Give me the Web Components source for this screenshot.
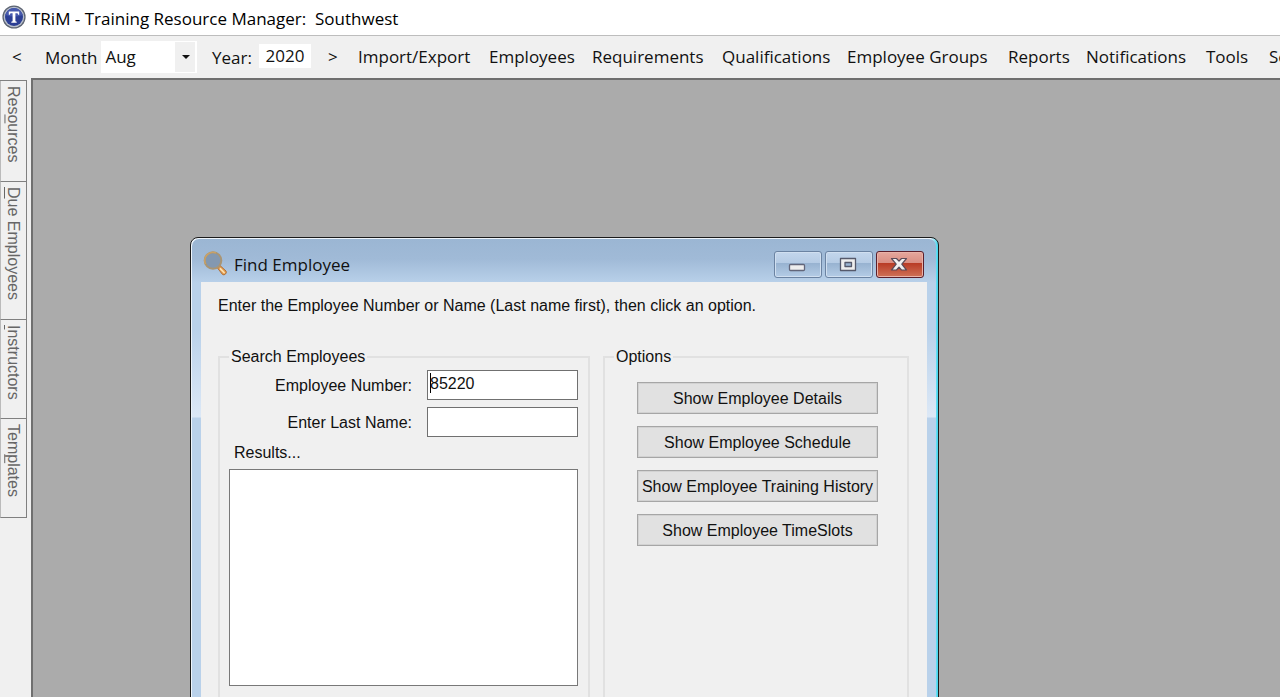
<!DOCTYPE html>
<html lang="en">
<head>
<meta charset="utf-8">
<title>TRiM - Training Resource Manager</title>
<style>
  html, body { height: 100%; margin: 0; overflow: hidden; }
  body {
    --ui: "Open Sans", "Noto Sans", sans-serif;
    --classic: "Liberation Sans", Arial, sans-serif;
    --face: #f0f0f0;
    font-family: var(--ui);
    font-size: 17px;
    color: #111;
  }
</style>
</head>
<body>
<trim-app></trim-app>
<script>
const define = (name, html, setup) => {
  const tpl = document.createElement('template');
  tpl.innerHTML = html;
  customElements.define(name, class extends HTMLElement {
    constructor() {
      super();
      this.attachShadow({ mode: 'open' }).append(tpl.content.cloneNode(true));
    }
    connectedCallback() {
      if (setup) setup(this, this.shadowRoot);
    }
  });
};

define('app-titlebar', `
<style>
  :host { display: flex; align-items: center; gap: 5px; height: 35px; padding-left: 2px; background: #fff; color: #000; }
  svg { width: 24px; height: 24px; flex: none; margin-top: -2px; }
  h1 { margin: 0; font-size: 17px; line-height: 24px; font-weight: 400; white-space: pre; padding-top: 2px; }
</style>
<svg viewBox="0 0 24 24" aria-hidden="true">
  <circle cx="12" cy="12" r="11.6" fill="#5d6472"/>
  <circle cx="12" cy="12" r="10.3" fill="#b9c0cc"/>
  <circle cx="12" cy="12" r="9" fill="#2c3f95"/>
  <path d="M3.400 10a8.800 8.800 0 0 1 17.200 0q-8.600 3-17.200 0z" fill="#4659ad"/>
  <path d="M6.800 6.500h10.400v3.300h-1l-.7-1.500h-2.100v8l1.300.5v1H9.300v-1l1.300-.5v-8H8.500l-.7 1.500h-1z" fill="#fff"/>
</svg>
<h1><slot></slot></h1>`);

define('menu-item', `
<style>
  :host { display: block; flex: none; }
  button { all: unset; display: block; font: inherit; line-height: 24px; white-space: nowrap; cursor: default; }
</style>
<button type="button"><slot></slot></button>`);

define('month-picker', `
<style>
  :host { display: flex; align-items: center; gap: 4px; flex: none; }
  .box { display: grid; background: #fff; width: 96px; height: 32px; align-items: center; }
  .box > * { grid-area: 1 / 1; }
  select { appearance: none; border: 0; margin: 0; padding: 0 0 2px 4px; width: 100%; height: 32px; background: linear-gradient(#f0f0f0, #f0f0f0) right 2px top 1px / 20px 30px no-repeat #fff; font: inherit; color: inherit; border-radius: 0; }
  i { justify-self: end; margin-right: 7px; border: 4px solid transparent; border-top-color: #111; border-bottom: 0; pointer-events: none; }
</style>
<label for="m">Month</label>
<span class="box"><select id="m"><option>Aug</option><option>Sep</option></select><i></i></span>`);

define('year-field', `
<style>
  :host { display: flex; align-items: center; gap: 7px; flex: none; }
  input { border: 0; box-sizing: border-box; width: 52px; height: 24px; margin: 0 0 3px; padding: 0; text-align: center; font: inherit; color: inherit; background: #fff; }
</style>
<label for="y">Year:</label>
<input id="y" value="2020">`);

define('app-toolbar', `
<style>
  :host { display: flex; height: 43px; box-sizing: border-box; border-top: 1px solid #bdbdbd; background: var(--face); align-items: center; overflow: hidden; padding-left: 12px; }
  .period { display: flex; align-items: center; flex: none; width: 346px; }
  .prev { width: 33px; }
  month-picker { width: 167px; }
  year-field { width: 116px; }
  nav { display: grid; grid-template-columns: 131px 103px 130px 125px 161px 78px 120px 63px auto; flex: none; }
</style>
<div class="period">
  <menu-item class="prev">&lt;</menu-item>
  <month-picker></month-picker>
  <year-field></year-field>
  <menu-item>&gt;</menu-item>
</div>
<nav aria-label="Main">
  <menu-item>Import/Export</menu-item>
  <menu-item>Employees</menu-item>
  <menu-item>Requirements</menu-item>
  <menu-item>Qualifications</menu-item>
  <menu-item>Employee Groups</menu-item>
  <menu-item>Reports</menu-item>
  <menu-item>Notifications</menu-item>
  <menu-item>Tools</menu-item>
  <menu-item>Settings</menu-item>
</nav>`);

define('side-tab', `
<style>
  :host { display: block; }
  button { all: unset; display: block; box-sizing: border-box; width: 27px; height: var(--len, 99px); padding: 5px 0 0; border: 1px solid #808080; border-top: 0; writing-mode: vertical-rl; font: 16px/25px var(--classic); color: #666; white-space: nowrap; border-left-color: #bbb; cursor: default; }
</style>
<button type="button"><slot></slot></button>`);

define('side-tabs', `
<style>
  :host { display: flex; flex-direction: column; width: 31px; flex: none; box-sizing: border-box; padding-top: 2px; background: var(--face); }
  nav { display: flex; flex-direction: column; border-top: 1px solid #808080; width: 27px; }
  .due { --len: 138px; }
  .first { --len: 101px; }
</style>
<nav aria-label="Panels">
  <side-tab class="first">Res<u>o</u>urces</side-tab>
  <side-tab class="due"><u>D</u>ue Employees</side-tab>
  <side-tab><u>I</u>nstructors</side-tab>
  <side-tab>Tem<u>p</u>lates</side-tab>
</nav>`);

define('caption-button', `
<style>
  :host { display: block; }
  button { display: grid; place-items: center; box-sizing: border-box; width: 48px; height: 27px; margin: 0; padding: 0; border: 1px solid #6b83a2; border-radius: 3px; background: linear-gradient(#c3d6ec 0, #b5cbe4 44%, #98b3d1 46%, #b4cce6 100%); box-shadow: inset 0 0 0 1px #d0dff0; }
  :host([kind=close]) button { border-color: #5c1f2b; background: linear-gradient(#e5a79d 0, #d98e82 44%, #b93c26 46%, #cf7258 100%); box-shadow: inset 0 0 0 1px #e9b2a8; }
  svg { width: 20px; height: 18px; display: none; margin-right: 2px; }
  :host([kind=min]) .min, :host([kind=max]) .max, :host([kind=close]) .close { display: block; }
</style>
<button type="button">
  <svg class="min" viewBox="0 0 20 18"><rect x="2.500" y="8.500" width="15" height="6" rx="1" fill="#eee" stroke="#62667a" stroke-width="1.300"/></svg>
  <svg class="max" viewBox="0 0 20 18"><path d="M2.500 2.500h15v12h-15zM7 6.500h6.500v4H7z" fill="#eee" fill-rule="evenodd" stroke="#55596b" stroke-width="1.300" stroke-linejoin="round"/></svg>
  <svg class="close" viewBox="0 0 20 18"><path d="M2.500 2.500h5L10 5.200l2.500-2.700h5l-4.700 5.700 4.700 5.800h-5L10 11.200 7.500 14h-5l4.700-5.800z" fill="#f1f1f1" stroke="#5b4b58" stroke-width="1.200" stroke-linejoin="round"/></svg>
</button>`, (el, root) => root.querySelector('button').setAttribute('aria-label',
  { min: 'Minimize', max: 'Maximize', close: 'Close' }[el.getAttribute('kind')]));

define('group-box', `
<style>
  :host { display: flex; }
  fieldset { flex: 1; min-width: 0; margin: 0; padding: 0; border: 2px solid #e1e1e1; box-sizing: border-box; }
  legend { margin-left: 9px; padding: 0 2px; line-height: 24px; height: 24px; }
</style>
<fieldset><legend></legend><slot></slot></fieldset>`,
(el, root) => { root.querySelector('legend').textContent = el.getAttribute('label'); });

define('text-field', `
<style>
  :host { display: grid; grid-template-columns: 1fr 151px; column-gap: 15px; align-items: center; height: 30px; }
  label { text-align: right; white-space: nowrap; padding-top: 2px; }
  input { box-sizing: border-box; width: 100%; height: 30px; margin: 0; padding: 0 0 3px 2px; border: 1px solid #707070; border-radius: 0; background: #fff; font: inherit; color: inherit; outline: 0; }
  :host([active]) input { background: linear-gradient(#000, #000) 2px 2px / 1px 20px no-repeat #fff; }
</style>
<label for="f"></label><input id="f">`,
(el, root) => {
  root.querySelector('label').textContent = el.getAttribute('label');
  root.querySelector('input').value = el.getAttribute('value') || '';
});

define('result-list', `
<style>
  :host { display: flex; flex-direction: column; }
  label { padding-left: 5px; line-height: 32px; }
  select { width: 100%; height: 217px; box-sizing: border-box; border: 1px solid #787878; border-radius: 0; background: #fff; margin: 0; outline: 0; }
</style>
<label for="r">Results...</label><select id="r" size="10"></select>`);

define('push-button', `
<style>
  :host { display: block; }
  button { box-sizing: border-box; width: 100%; height: 32px; margin: 0; padding: 1px 0 0; border: 1px solid #a6a6a6; box-shadow: inset 0 0 0 1px #d2d2d2; border-radius: 0; background: #e1e1e1; font: inherit; color: inherit; white-space: nowrap; }
</style>
<button type="button"><slot></slot></button>`);

define('find-dialog', `
<style>
  :host { display: block; box-sizing: border-box; border: 1px solid #1b1b1b; border-radius: 8px 8px 0 0; padding: 1px 2px 10px 1px;
    background: linear-gradient(90deg, #eef5fc 99%, #3fd5ee 100%); font: 16px/24px var(--classic); }
  .frame { border-radius: 7px 7px 0 0; padding: 0 9px 10px 9px;
    background: linear-gradient(#9bb6d3 0, #a0bad7 20px, #b9d1ea 44px, #b9d1ea 90px, #dce8f6 178px, #b9d1ea 179px); }
  header { display: flex; align-items: center; height: 43px; padding: 0 3px 0 2px; gap: 7px; font-family: var(--ui); }
  header svg { width: 24px; height: 26px; flex: none; margin-top: 6px; }
  h2 { flex: 1; margin: 0; padding-top: 9px; font-size: 17px; font-weight: 400; }
  .controls { display: flex; gap: 3px; padding-top: 8px; }
  main { background: var(--face); padding: 12px 18px 30px 17px; }
  p { margin: 0 0 27px; line-height: 24px; white-space: nowrap; }
  .groups { display: grid; grid-template-columns: 372px 1fr; gap: 13px; }
  .search { display: grid; gap: 7px; padding: 1px 10px 40px 9px; }
  .search result-list { margin-top: -7px; }
  .options { display: grid; gap: 12px; padding: 13px 29px 40px 32px; }
</style>
<div class="frame">
<header>
  <svg viewBox="0 0 24 26" aria-hidden="true">
    <path d="M14.500 17l2.500-2.500 6 5.500q1 1.500-.5 3t-3 .5z" fill="#e39a4c" stroke="#b0713a"/>
    <path d="M17.500 17.800l3.500 3.700" stroke="#fbe0b0" stroke-width="1.800" stroke-linecap="round"/>
    <circle cx="10" cy="9.500" r="8.300" fill="#8398b0" stroke="#a99574" stroke-width="2"/>
    <path d="M2.500 13A8.300 8.300 0 0 1 13 1.800" fill="none" stroke="#c9a267" stroke-width="1.500"/>
  </svg>
  <h2>Find Employee</h2>
  <div class="controls">
    <caption-button kind="min"></caption-button>
    <caption-button kind="max"></caption-button>
    <caption-button kind="close"></caption-button>
  </div>
</header>
<main>
  <p>Enter the Employee Number or Name (Last name first), then click an option.</p>
  <div class="groups">
    <group-box label="Search Employees">
      <div class="search">
        <text-field label="Employee Number:" value="85220" active></text-field>
        <text-field label="Enter Last Name:"></text-field>
        <result-list></result-list>
      </div>
    </group-box>
    <group-box label="Options">
      <div class="options">
        <push-button>Show Employee Details</push-button>
        <push-button>Show Employee Schedule</push-button>
        <push-button>Show Employee Training History</push-button>
        <push-button>Show Employee TimeSlots</push-button>
      </div>
    </group-box>
  </div>
</main>
</div>`);

define('trim-app', `
<style>
  :host { display: flex; flex-direction: column; height: 100vh; overflow: hidden; }
  .body { flex: 1; min-height: 0; display: flex; }
  .desktop { flex: 1; position: relative; overflow: hidden; background: #ababab; border: solid #6f6f6f; border-width: 2px 0 0 2px; }
  find-dialog { position: absolute; left: 157px; top: 157px; width: 749px; }
</style>
<app-titlebar>TRiM - Training Resource Manager:  Southwest</app-titlebar>
<app-toolbar></app-toolbar>
<div class="body">
  <side-tabs></side-tabs>
  <div class="desktop"><find-dialog></find-dialog></div>
</div>`);
</script>
</body>
</html>
